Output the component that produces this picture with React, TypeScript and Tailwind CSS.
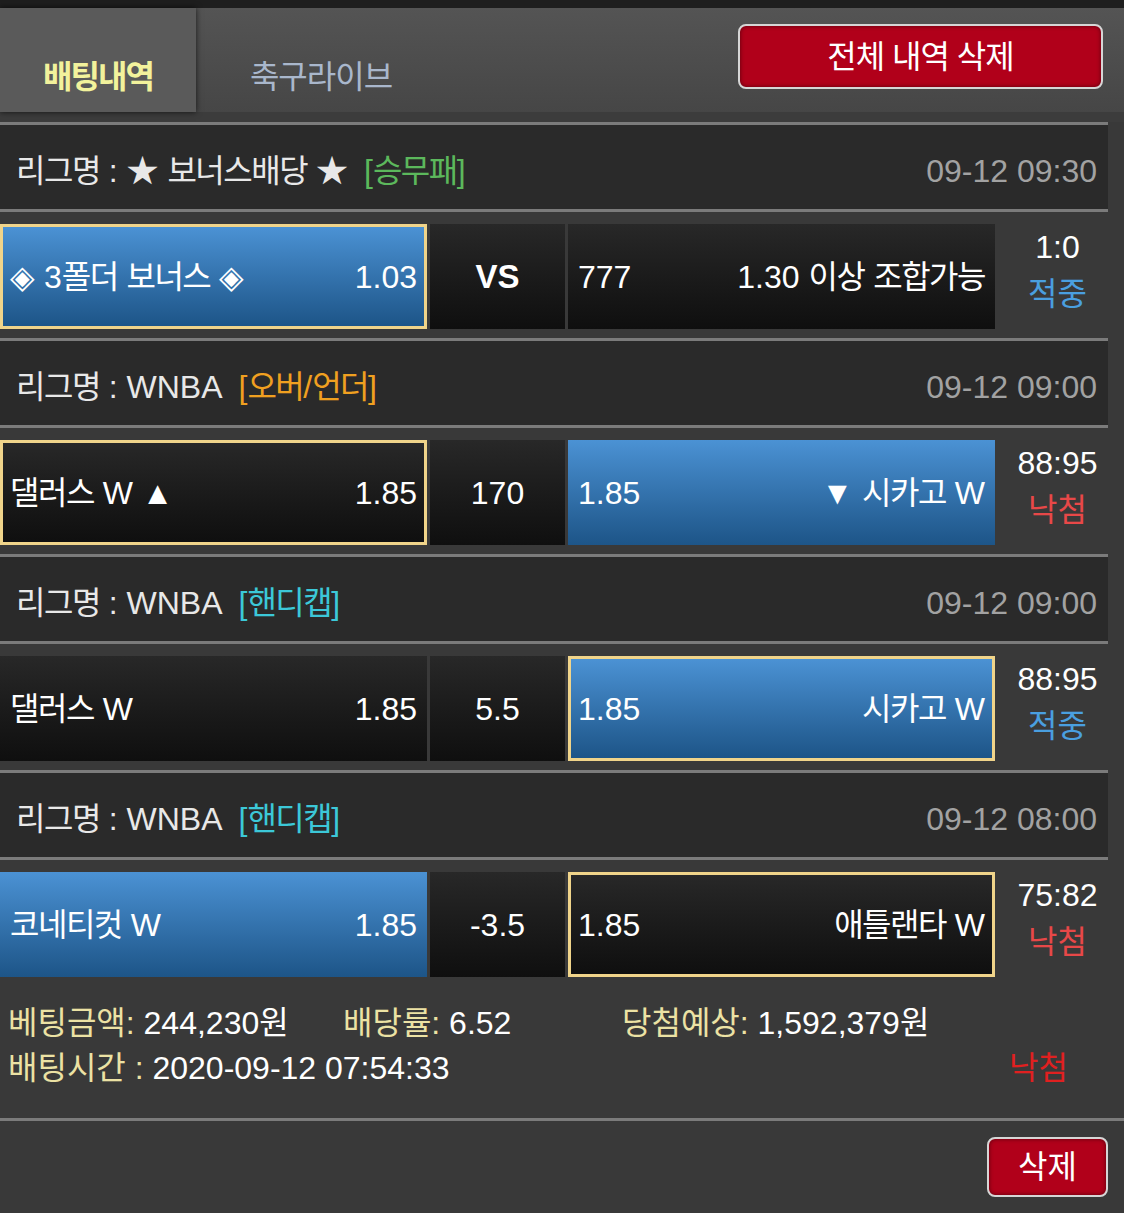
import React from "react";

type Cell = {
  left: string;
  right: string;
  blue: boolean;
  selected: boolean;
};

type Block = {
  league: string;
  tag: string;
  tagClass: string;
  time: string;
  home: Cell;
  mid: string;
  midBold?: boolean;
  away: Cell;
  score: string;
  result: string;
  resultClass: string;
};

const blocks: Block[] = [
  {
    league: "리그명 : ★ 보너스배당 ★",
    tag: "[승무패]",
    tagClass: "text-[#5cb85c]",
    time: "09-12 09:30",
    home: { left: "◈ 3폴더 보너스 ◈", right: "1.03", blue: true, selected: true },
    mid: "VS",
    midBold: true,
    away: { left: "777", right: "1.30 이상 조합가능", blue: false, selected: false },
    score: "1:0",
    result: "적중",
    resultClass: "text-[#4a9fe0]",
  },
  {
    league: "리그명 : WNBA",
    tag: "[오버/언더]",
    tagClass: "text-[#f0a020]",
    time: "09-12 09:00",
    home: { left: "댈러스 W ▲", right: "1.85", blue: false, selected: true },
    mid: "170",
    away: { left: "1.85", right: "▼ 시카고 W", blue: true, selected: false },
    score: "88:95",
    result: "낙첨",
    resultClass: "text-[#e84848]",
  },
  {
    league: "리그명 : WNBA",
    tag: "[핸디캡]",
    tagClass: "text-[#3cc8d8]",
    time: "09-12 09:00",
    home: { left: "댈러스 W", right: "1.85", blue: false, selected: false },
    mid: "5.5",
    away: { left: "1.85", right: "시카고 W", blue: true, selected: true },
    score: "88:95",
    result: "적중",
    resultClass: "text-[#4a9fe0]",
  },
  {
    league: "리그명 : WNBA",
    tag: "[핸디캡]",
    tagClass: "text-[#3cc8d8]",
    time: "09-12 08:00",
    home: { left: "코네티컷 W", right: "1.85", blue: true, selected: false },
    mid: "-3.5",
    away: { left: "1.85", right: "애틀랜타 W", blue: false, selected: true },
    score: "75:82",
    result: "낙첨",
    resultClass: "text-[#e84848]",
  },
];

function Tight({ text }: { text: string }) {
  const parts = text.split(/([\uAC00-\uD7A3]+)/).filter((p) => p.length > 0);
  return (
    <>
      {parts.map((p, i) =>
        /[\uAC00-\uD7A3]/.test(p) ? (
          <span key={i} className="tracking-[-1.5px]">
            {p}
          </span>
        ) : (
          <span key={i}>{p}</span>
        )
      )}
    </>
  );
}

function BetCell({ cell }: { cell: Cell }) {
  const bg = cell.blue
    ? "bg-gradient-to-b from-[#4b92d4] to-[#1d5588]"
    : "bg-gradient-to-b from-[#282828] to-[#0f0f0f]";
  const border = cell.selected ? "border-[3px] border-[#f0d48a] px-[7px]" : "px-[10px]";
  return (
    <div
      className={`w-[427px] h-[105px] shrink-0 flex items-center justify-between text-white text-[32px] ${bg} ${border}`}
    >
      <span className="whitespace-pre">
        <Tight text={cell.left} />
      </span>
      <span className="whitespace-pre">
        <Tight text={cell.right} />
      </span>
    </div>
  );
}

function BlockView({ b }: { b: Block }) {
  return (
    <div>
      <div className="w-[1108px] h-[90px] bg-[#2a2a2a] border-y-[3px] border-[#7b7b7b] flex items-center justify-between pl-4 pr-[11px] pt-[8px] text-[32px]">
        <div className="flex items-center whitespace-pre">
          <span className="text-[#e8e8e8]">
            <Tight text={b.league} />
          </span>
          <span className={`ml-4 ${b.tagClass}`}>
            <Tight text={b.tag} />
          </span>
        </div>
        <span className="text-[#a2a2a2]">{b.time}</span>
      </div>
      <div className="flex pt-3 pb-[9px] h-[126px]">
        <BetCell cell={b.home} />
        <div
          className={`ml-[3px] w-[135px] h-[105px] shrink-0 bg-gradient-to-b from-[#282828] to-[#0f0f0f] flex items-center justify-center text-white ${
            b.midBold ? "font-bold text-[33px]" : "text-[32px]"
          }`}
        >
          {b.mid}
        </div>
        <div className="ml-[3px]">
          <BetCell cell={b.away} />
        </div>
        <div className="w-[113px] h-[105px] shrink-0 pl-3 pb-3 flex flex-col items-center justify-center text-[32px] leading-[47px]">
          <span className="text-white">{b.score}</span>
          <span className={b.resultClass}>{b.result}</span>
        </div>
      </div>
    </div>
  );
}

export default function App() {
  return (
    <div
      className="w-[1124px] h-[1213px] bg-[#393939] overflow-hidden"
      style={{ fontFamily: '"Liberation Sans", "Noto Sans CJK KR", sans-serif' }}
    >
      <div className="h-2 bg-[#1e1e1e]" />
      <div className="h-[104px] bg-gradient-to-b from-[#545454] to-[#464646] flex items-stretch relative">
        <div className="w-[196px] bg-[#5a5a5a] shadow-[0_0_6px_rgba(0,0,0,0.7)] flex items-end justify-center pb-[11px]">
          <span className="text-[#f2f29c] text-[32px] font-bold tracking-[-2px]">배팅내역</span>
        </div>
        <div className="w-[250px] flex items-end justify-center pb-[11px]">
          <span className="text-[#a9b7cc] text-[32px] tracking-[-1px]">축구라이브</span>
        </div>
        <div className="flex-1 flex justify-end items-start pt-4 pr-[21px]">
          <div className="w-[365px] h-[65px] rounded-lg border-2 border-[#d6d6d6] bg-[#b1001a] shadow-[inset_0_0_4px_rgba(0,0,0,0.5)] flex items-center justify-center text-white text-[32px] tracking-[-1px]">
            전체 내역 삭제
          </div>
        </div>
      </div>
      <div className="h-[10px] bg-[#3c3c3c]" />
      {blocks.map((b, i) => (
        <BlockView key={i} b={b} />
      ))}
      <div className="h-[132px] pl-2 pr-[56px] pt-[14px] text-[32px]">
        <div className="flex items-center h-[45px]">
          <span className="w-[335px]">
            <span className="text-[#ece2a4]">베팅금액:</span>
            <span className="text-white"> 244,230원</span>
          </span>
          <span className="w-[279px]">
            <span className="text-[#ece2a4]">배당률:</span>
            <span className="text-white"> 6.52</span>
          </span>
          <span>
            <span className="text-[#ece2a4]">당첨예상:</span>
            <span className="text-white"> 1,592,379원</span>
          </span>
        </div>
        <div className="flex items-center justify-between h-[45px]">
          <span>
            <span className="text-[#ece2a4]">배팅시간 :</span>
            <span className="text-white"> 2020-09-12 07:54:33</span>
          </span>
          <span className="text-[#e02020]">낙첨</span>
        </div>
      </div>
      <div className="h-[3px] bg-[#7b7b7b]" />
      <div className="flex justify-end pt-4 pr-4">
        <div className="w-[121px] h-[60px] rounded-lg border-2 border-[#d6d6d6] bg-[#b1001a] shadow-[inset_0_0_4px_rgba(0,0,0,0.5)] flex items-center justify-center text-white text-[32px]">
          삭제
        </div>
      </div>
    </div>
  );
}
